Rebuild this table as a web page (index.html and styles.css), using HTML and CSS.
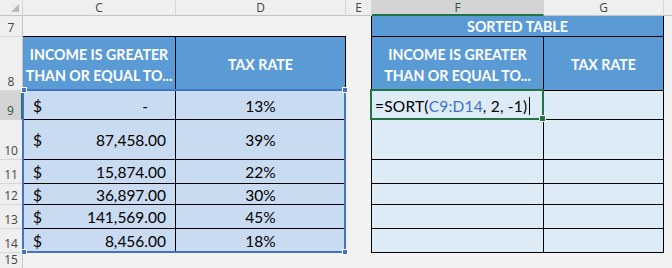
FILE: index.html
```html
<!DOCTYPE html>
<html>
<head>
<meta charset="utf-8">
<link rel="stylesheet" href="styles.css">
</head>
<body>
<div class="sheet">
  <div class="colheads">
    <div class="ch corner"><span class="tri"></span></div>
    <div class="ch col-c">C</div>
    <div class="ch col-d">D</div>
    <div class="ch col-e">E</div>
    <div class="ch col-f active">F</div>
    <div class="ch col-g">G</div>
    <div class="ch col-h"></div>
  </div>

  <div class="rowheads">
    <div class="rh h21">7</div>
    <div class="rh h54">8</div>
    <div class="rh h29 active">9</div>
    <div class="rh h40">10</div>
    <div class="rh h24">11</div>
    <div class="rh h21">12</div>
    <div class="rh h24">13</div>
    <div class="rh h24">14</div>
    <div class="rh last">15</div>
  </div>

  <div class="tbl tbl-left">
    <div class="hd">INCOME IS GREATER<br>THAN OR EQUAL TO...</div>
    <div class="hd">TAX RATE</div>

    <div class="cell money"><span>$</span><span class="dash">-</span></div>
    <div class="cell pct">13%</div>
    <div class="cell money"><span>$</span><span>87,458.00</span></div>
    <div class="cell pct">39%</div>
    <div class="cell money"><span>$</span><span>15,874.00</span></div>
    <div class="cell pct">22%</div>
    <div class="cell money"><span>$</span><span>36,897.00</span></div>
    <div class="cell pct">30%</div>
    <div class="cell money"><span>$</span><span>141,569.00</span></div>
    <div class="cell pct">45%</div>
    <div class="cell money"><span>$</span><span>8,456.00</span></div>
    <div class="cell pct">18%</div>

    <div class="range-ref">
      <span class="hnd tl"></span><span class="hnd tr"></span>
      <span class="hnd bl"></span><span class="hnd br"></span>
    </div>
  </div>

  <div class="tbl tbl-right">
    <div class="hd title">SORTED TABLE</div>
    <div class="hd">INCOME IS GREATER<br>THAN OR EQUAL TO...</div>
    <div class="hd">TAX RATE</div>

    <div class="cell formula">=SORT(<span class="ref">C9:D14</span>, 2, -1)<span class="caret"></span></div>
    <div class="cell"></div>
    <div class="cell"></div><div class="cell"></div>
    <div class="cell"></div><div class="cell"></div>
    <div class="cell"></div><div class="cell"></div>
    <div class="cell"></div><div class="cell"></div>
    <div class="cell"></div><div class="cell"></div>

    <div class="active-cell"><span class="fill-handle"></span></div>
  </div>
</div>
</body>
</html>
```

FILE: styles.css
```css
* { box-sizing: border-box; }

html, body {
  margin: 0;
  padding: 0;
  background: #f2f2f2;
}

.sheet {
  width: 672px;
  height: 268px;
  overflow: hidden;
  display: grid;
  grid-template-columns: 23px 323px 25px 293px 1fr;
  grid-template-rows: 16px 20px 217px 1fr;
  font-family: Lato, "Open Sans", sans-serif;
}

/* column headers */
.colheads {
  grid-column: 1 / -1;
  grid-row: 1;
  display: flex;
}
.ch {
  height: 16px;
  background: #efefef;
  border-right: 1px solid #d6d6d6;
  border-bottom: 1px solid #c4c4c4;
  font-family: "Open Sans", sans-serif;
  font-size: 12px;
  color: #444;
  display: flex;
  align-items: center;
  justify-content: center;
  line-height: 1;
  padding-top: 1px;
}
.corner { width: 23px; position: relative; }
.tri {
  position: absolute;
  right: 3px;
  bottom: 3px;
  width: 0;
  height: 0;
  border-left: 8px solid transparent;
  border-bottom: 8px solid #b8b8b8;
}
.col-c { width: 153px; }
.col-d { width: 170px; }
.col-e { width: 26px; }
.col-f { width: 172px; }
.col-g { width: 120px; }
.col-h { flex: 1; border-right: none; }
.ch.active {
  background: #d4d4d4;
  border-bottom: 2px solid #217346;
  color: #1d5e3a;
}

/* row headers */
.rowheads {
  grid-column: 1;
  grid-row: 2 / -1;
  display: flex;
  flex-direction: column;
}
.rh {
  background: #efefef;
  border-right: 1px solid #c4c4c4;
  border-bottom: 1px solid #d6d6d6;
  font-family: "Open Sans", sans-serif;
  font-size: 12px;
  color: #444;
  display: flex;
  align-items: flex-end;
  justify-content: center;
  padding-bottom: 2px;
  line-height: 1;
}
.h21 { height: 21px; }
.h24 { height: 24px; }
.h29 { height: 29px; }
.h40 { height: 40px; }
.h54 { height: 54px; }
.rh.last { flex: 1; border-bottom: none; }
.rh.active {
  background: #d4d4d4;
  border-right: 2px solid #217346;
  color: #1d5e3a;
}

/* tables */
.tbl {
  display: grid;
  gap: 1px;
  background: #000;
  position: relative;
}
.tbl-left {
  grid-column: 2;
  grid-row: 3;
  padding: 1px 1px 1px 0;
  grid-template-columns: 152px 169px;
  grid-template-rows: 53px 28px 39px 23px 20px 23px 23px;
}
.tbl-right {
  grid-column: 4;
  grid-row: 2 / 4;
  padding: 0 1px 1px 1px;
  grid-template-columns: 171px 119px;
  grid-template-rows: 20px 53px 28px 39px 23px 20px 23px 23px;
}

.hd {
  background: #5b9bd5;
  color: #fff;
  font-weight: 700;
  font-size: 14.2px;
  line-height: 21px;
  text-align: center;
  display: flex;
  align-items: center;
  justify-content: center;
  padding-top: 2px;
}
.hd.title {
  grid-column: 1 / -1;
  padding-top: 0;
}

.cell {
  background: #ddebf7;
  font-size: 15.5px;
  color: #000;
  display: flex;
  align-items: center;
}
.tbl-left .cell { background: #c9dbf0; }

.money {
  justify-content: space-between;
  padding: 1px 9px 0 10px;
}
.money .dash { margin-right: 18px; }
.pct {
  justify-content: center;
  padding-top: 1px;
}

.formula {
  padding: 1px 0 0 3px;
  white-space: nowrap;
  letter-spacing: 0.2px;
}
.ref { color: #3f72c6; }
.caret {
  display: inline-block;
  width: 1px;
  height: 18px;
  background: #000;
  margin-left: 2px;
}

/* overlays */
.range-ref {
  position: absolute;
  left: -1px;
  top: 53px;
  width: 324px;
  height: 164px;
  border: 2px solid #4472c4;
  pointer-events: none;
}
.hnd {
  position: absolute;
  width: 6px;
  height: 6px;
  background: #4472c4;
  border: 1px solid #fff;
}
.hnd.tl { left: -3px; top: -4px; }
.hnd.tr { right: -4px; top: -4px; }
.hnd.bl { left: -3px; bottom: -4px; }
.hnd.br { right: -4px; bottom: -4px; }

.active-cell {
  position: absolute;
  left: -1px;
  top: 73px;
  width: 174px;
  height: 31px;
  border: 2px solid #217346;
}
.fill-handle {
  position: absolute;
  right: -4px;
  bottom: -4px;
  width: 7px;
  height: 7px;
  background: #217346;
  border: 1px solid #fff;
}
```
